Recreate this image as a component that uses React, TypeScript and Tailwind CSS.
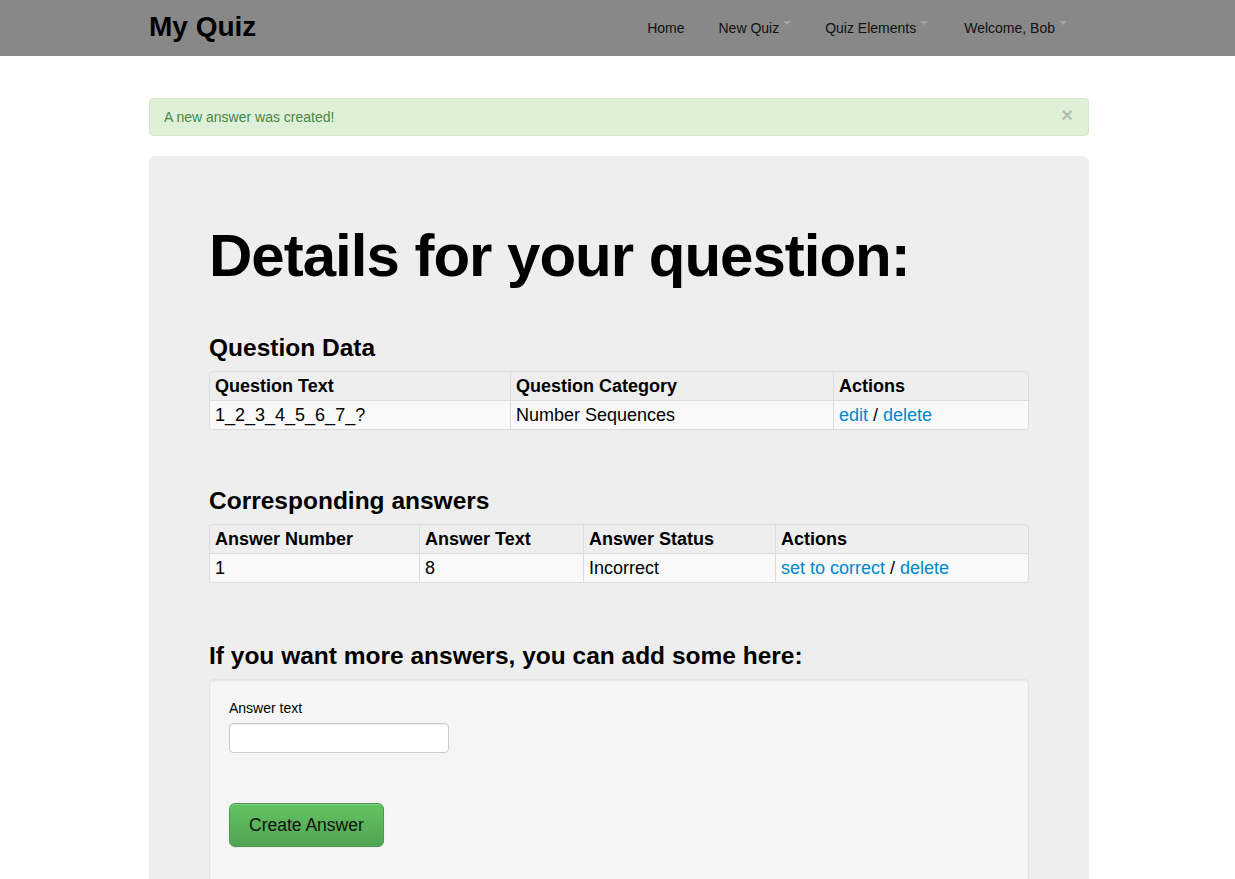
import React from 'react';

const font = { fontFamily: '"Liberation Sans", Arial, sans-serif' };

function Caret() {
  return <span className="ml-[4px] mt-[3px] inline-block h-0 w-0 border-x-[4px] border-t-[4px] border-x-transparent border-t-[#a3a3a3]" />;
}

function NavItem({ label, caret, className }: { label: string; caret?: boolean; className?: string }) {
  return (
    <li className={`flex items-start leading-[20px] ${className ?? ''}`}>
      <a href="#" className="text-[14px] text-[#111]">{label}</a>
      {caret && <Caret />}
    </li>
  );
}

const link = 'text-[#0088cc]';

export default function App() {
  return (
    <div className="min-h-screen bg-white pl-[3px] text-[#000]" style={font}>
      {/* Navbar */}
      <div className="-ml-[3px] h-14 bg-[#888888] pl-[3px]">
        <div className="mx-auto flex h-full w-[940px] items-center justify-between">
          <a href="#" className="pb-[2px] text-[28px] font-bold leading-none text-[#000]">My Quiz</a>
          <ul className="mr-[22px] flex items-start gap-[34px]">
            <NavItem label="Home" />
            <NavItem label="New Quiz" caret />
            <NavItem label="Quiz Elements" caret />
            <NavItem label="Welcome, Bob" caret className="ml-[2px]" />
          </ul>
        </div>
      </div>

      <div className="mx-auto w-[940px]">
        {/* Alert */}
        <div className="relative mt-[42px] rounded-[4px] border border-[#d6e9c6] bg-[#dff0d8] py-[8px] pl-[14px] pr-[35px] text-[14px] leading-[20px] text-[#468847]">
          A new answer was created!
          <span className="absolute right-[15px] top-[6px] text-[20px] font-bold leading-[20px] text-[#000] opacity-20">×</span>
        </div>

        {/* Hero */}
        <div className="mt-[20px] rounded-[6px] bg-[#eeeeee] px-[60px] pb-[60px] pt-[60px] text-[18px]">
          <h1 className="mt-[10px] text-[60px] font-bold leading-none tracking-[-1px]">Details for your question:</h1>

          <h3 className="mb-[3px] mt-[42px] text-[24.5px] font-bold leading-[40px]">Question Data</h3>
          <div className="overflow-hidden rounded-[4px] border border-[#dddddd]">
            <table className="w-full table-fixed border-separate border-spacing-0 text-left leading-[20px]">
              <thead>
                <tr>
                  <th className="w-[300px] px-[5px] py-[4px] font-bold">Question Text</th>
                  <th className="w-[323px] border-l border-[#dddddd] px-[5px] py-[4px] font-bold">Question Category</th>
                  <th className="border-l border-[#dddddd] px-[5px] py-[4px] font-bold">Actions</th>
                </tr>
              </thead>
              <tbody>
                <tr className="bg-[#f9f9f9]">
                  <td className="border-t border-[#dddddd] px-[5px] py-[4px]">1_2_3_4_5_6_7_?</td>
                  <td className="border-l border-t border-[#dddddd] px-[5px] py-[4px]">Number Sequences</td>
                  <td className="border-l border-t border-[#dddddd] px-[5px] py-[4px]">
                    <a href="#" className={link}>edit</a> / <a href="#" className={link}>delete</a>
                  </td>
                </tr>
              </tbody>
            </table>
          </div>

          <h3 className="mb-[3px] mt-[51px] text-[24.5px] font-bold leading-[40px]">Corresponding answers</h3>
          <div className="overflow-hidden rounded-[4px] border border-[#dddddd]">
            <table className="w-full table-fixed border-separate border-spacing-0 text-left leading-[20px]">
              <thead>
                <tr>
                  <th className="w-[209px] px-[5px] py-[4px] font-bold">Answer Number</th>
                  <th className="w-[164px] border-l border-[#dddddd] px-[5px] py-[4px] font-bold">Answer Text</th>
                  <th className="w-[192px] border-l border-[#dddddd] px-[5px] py-[4px] font-bold">Answer Status</th>
                  <th className="border-l border-[#dddddd] px-[5px] py-[4px] font-bold">Actions</th>
                </tr>
              </thead>
              <tbody>
                <tr className="bg-[#f9f9f9]">
                  <td className="border-t border-[#dddddd] px-[5px] py-[4px]">1</td>
                  <td className="border-l border-t border-[#dddddd] px-[5px] py-[4px]">8</td>
                  <td className="border-l border-t border-[#dddddd] px-[5px] py-[4px]">Incorrect</td>
                  <td className="border-l border-t border-[#dddddd] px-[5px] py-[4px]">
                    <a href="#" className={link}>set to correct</a> / <a href="#" className={link}>delete</a>
                  </td>
                </tr>
              </tbody>
            </table>
          </div>

          <h3 className="mb-[3px] mt-[53px] text-[24.5px] font-bold leading-[40px]">If you want more answers, you can add some here:</h3>
          <div className="rounded-[4px] border border-[#e3e3e3] bg-[#f5f5f5] px-[19px] pb-[60px] pt-[18px] shadow-[inset_0_1px_1px_rgba(0,0,0,0.05)]">
            <label className="mb-[5px] block text-[14px] leading-[20px]">Answer text</label>
            <input
              type="text"
              className="block h-[30px] w-[220px] rounded-[4px] border border-[#cccccc] bg-white px-[6px] text-[14px] shadow-[inset_0_1px_1px_rgba(0,0,0,0.075)] outline-none"
            />
            <button className="mt-[50px] h-[44px] rounded-[6px] border border-[#4b9a4b] bg-gradient-to-b from-[#62c462] to-[#51a351] px-[19px] text-[17.5px] leading-[20px] text-[#111] shadow-[inset_0_1px_0_rgba(255,255,255,0.2),0_1px_2px_rgba(0,0,0,0.05)]">
              Create Answer
            </button>
          </div>
        </div>
      </div>
    </div>
  );
}
